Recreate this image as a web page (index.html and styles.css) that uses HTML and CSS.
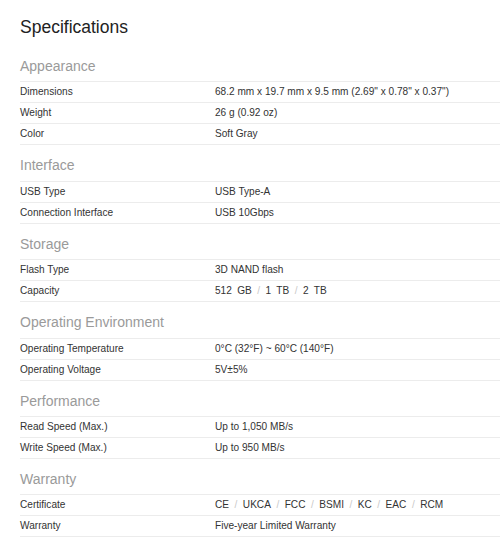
FILE: index.html
```html
<!DOCTYPE html>
<html lang="en">
<head>
<meta charset="utf-8">
<title>Specifications</title>
<link rel="stylesheet" href="styles.css">
</head>
<body>
<main class="specs">
  <h1 class="title">Specifications</h1>

  <section class="group">
    <h2 class="group-title">Appearance</h2>
    <div class="row"><div class="label">Dimensions</div><div class="value">68.2 mm x 19.7 mm x 9.5 mm (2.69" x 0.78" x 0.37")</div></div>
    <div class="row"><div class="label">Weight</div><div class="value">26 g (0.92 oz)</div></div>
    <div class="row"><div class="label">Color</div><div class="value">Soft Gray</div></div>
  </section>

  <section class="group">
    <h2 class="group-title">Interface</h2>
    <div class="row"><div class="label">USB Type</div><div class="value">USB Type-A</div></div>
    <div class="row"><div class="label">Connection Interface</div><div class="value">USB 10Gbps</div></div>
  </section>

  <section class="group">
    <h2 class="group-title">Storage</h2>
    <div class="row"><div class="label">Flash Type</div><div class="value">3D NAND flash</div></div>
    <div class="row"><div class="label">Capacity</div><div class="value list"><span class="wide">512 GB</span><span class="sep">/</span><span class="wide">1 TB</span><span class="sep">/</span><span class="wide">2 TB</span></div></div>
  </section>

  <section class="group">
    <h2 class="group-title">Operating Environment</h2>
    <div class="row"><div class="label">Operating Temperature</div><div class="value">0°C (32°F) ~ 60°C (140°F)</div></div>
    <div class="row"><div class="label">Operating Voltage</div><div class="value">5V±5%</div></div>
  </section>

  <section class="group">
    <h2 class="group-title">Performance</h2>
    <div class="row"><div class="label">Read Speed (Max.)</div><div class="value">Up to 1,050 MB/s</div></div>
    <div class="row"><div class="label">Write Speed (Max.)</div><div class="value">Up to 950 MB/s</div></div>
  </section>

  <section class="group">
    <h2 class="group-title">Warranty</h2>
    <div class="row"><div class="label">Certificate</div><div class="value list"><span>CE</span><span class="sep">/</span><span>UKCA</span><span class="sep">/</span><span>FCC</span><span class="sep">/</span><span>BSMI</span><span class="sep">/</span><span>KC</span><span class="sep">/</span><span>EAC</span><span class="sep">/</span><span>RCM</span></div></div>
    <div class="row"><div class="label">Warranty</div><div class="value">Five-year Limited Warranty</div></div>
  </section>
</main>
</body>
</html>
```

FILE: styles.css
```css
* { box-sizing: border-box; }

html, body {
  margin: 0;
  padding: 0;
  background: #ffffff;
}

body {
  font-family: "Liberation Sans", Arial, Helvetica, sans-serif;
  color: #333333;
}

.specs {
  padding-left: 20px;
}

.title {
  margin: 15px 0 17px;
  font-size: 17.5px;
  line-height: 24px;
  font-weight: normal;
  color: #222222;
}

.group-title {
  margin: 10px 0 5.4px;
  font-size: 14px;
  line-height: 20px;
  font-weight: normal;
  color: #9a9a9a;
}

.row {
  display: grid;
  grid-template-columns: 195px 1fr;
  height: 21px;
  border-top: 1px solid #ececec;
  font-size: 10.1px;
  line-height: 20px;
}

.row:last-child {
  height: 22px;
  border-bottom: 1px solid #ececec;
}

.label, .value {
  white-space: nowrap;
  color: #333333;
}

.list {
  display: flex;
}

.wide {
  word-spacing: 2.5px;
}

.sep {
  color: #c8c8c8;
  margin: 0 5.5px;
}
```
